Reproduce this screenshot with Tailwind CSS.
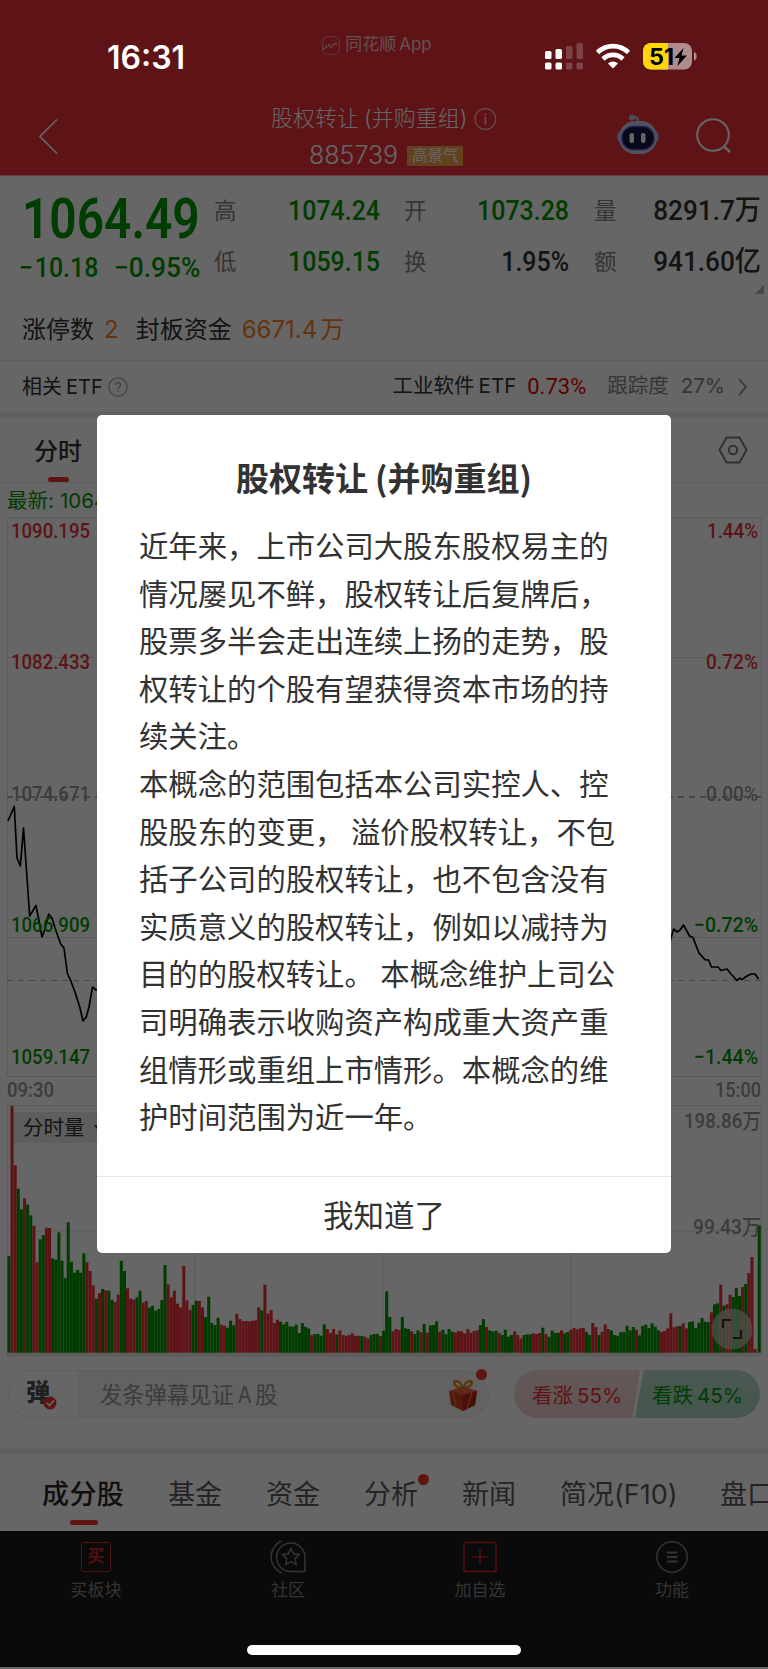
<!DOCTYPE html>
<html lang="zh-CN">

<head>
    <meta charset="UTF-8">
    <meta name="viewport" content="width=device-width, initial-scale=1.0">
    <title>股权转让(并购重组)</title>
    <script src="https://cdn.jsdelivr.net/npm/@tailwindcss/browser@4"></script>
</head>

<body class="relative w-[768px] h-[1669px] overflow-hidden bg-white whitespace-nowrap font-['Inter','Noto_Sans_CJK_SC',sans-serif]">

    <!-- Header -->
    <header class="h-[175px] bg-[#eb3237] text-white flex flex-col">
        <div class="h-[88px] flex justify-center items-center gap-[5px] text-[17px] text-white/75 pr-[14px] pt-[2px]">
            <svg class="w-[18px] h-[19px]" viewBox="0 0 18 19" fill="none" stroke="currentColor">
                <rect x="0.7" y="0.7" width="16.6" height="17.6" rx="5" stroke-opacity=".6" />
                <path d="M1 13l3-2 3-2 2 2 3-3 4-1" stroke-width="1.8" stroke-dasharray="2 1" />
            </svg>
            <span>同花顺<span class="ml-[3px]">App</span></span>
        </div>
        <div class="flex items-center h-[87px]">
            <svg class="w-[20px] h-[36px] ml-[39px] mt-[9px]" viewBox="0 0 20 36" fill="none" stroke="currentColor" stroke-width="1.6">
                <path d="M18 1.500L1 18.500l17 17" />
            </svg>
            <div class="w-[226px] ml-[212px] mt-[12px] flex flex-col font-light">
                <div class="flex items-center h-[36px] text-[22px]">
                    <span>股权转让<span class="ml-[5px]">(</span>并购重组)</span>
                    <svg class="w-[24px] h-[24px] ml-[7px]" viewBox="0 0 24 24" fill="none" stroke="currentColor" opacity=".7">
                        <circle cx="12" cy="12" r="11" stroke-width="1.3" />
                        <path d="M12 10v8M12 6v2" stroke-width="1.6" />
                    </svg>
                </div>
                <div class="flex items-center h-[38px] pl-[38px]">
                    <span class="text-[25px]">885739</span>
                    <span class="ml-[9px] w-[56px] h-[20px] leading-[20px] text-center text-[15.5px] bg-[#f6a24c] font-normal">高景气</span>
                </div>
            </div>
            <!-- assistant robot -->
            <svg class="w-[44px] h-[42px] ml-[119px] mt-[6px]" viewBox="0 0 44 42">
                <path d="M22 7c0-4-2-4-6-4" stroke="#b8c4dc" stroke-width="2.500" fill="none" />
                <circle cx="16" cy="3.500" r="3" fill="#b8c4dc" />
                <rect x="1" y="17" width="42" height="12" rx="5" fill="#9fb2d6" />
                <rect x="3" y="7" width="38" height="33" rx="16" fill="#c5d0e8" />
                <rect x="6" y="12.500" width="32" height="23" rx="11" fill="#101840" stroke="#6048c8" stroke-width="1.300" />
                <rect x="13.500" y="19" width="4.500" height="10" rx="2.200" fill="#fff" />
                <rect x="25" y="19" width="4.500" height="10" rx="2.200" fill="#fff" />
            </svg>
            <svg class="w-[36px] h-[36px] ml-[36px] mt-[9px]" viewBox="0 0 36 36" fill="none" stroke="currentColor" stroke-width="2">
                <circle cx="17" cy="17" r="15.800" />
                <path d="M27.500 28l6.500 6" stroke-width="2.600" />
            </svg>
        </div>
    </header>

    <!-- Quote summary -->
    <section class="h-[121px] border-t border-[#ffa0a0] flex">
        <div class="w-[214px] pl-[22px] text-[#009800] font-['Roboto'] font-medium">
            <div class="h-[86px] leading-[87px] text-[56px] font-semibold origin-left scale-x-[0.855]">1064.49</div>
            <div class="h-[30px] leading-[12px] text-[28px] flex">
                <span class="w-[92px]"><span class="inline-block origin-left scale-x-[0.89] -ml-[3px]">−<span class="ml-0.5">10.18</span></span></span>
                <span class="inline-block origin-left scale-x-[0.94]">−0.95%</span>
            </div>
        </div>
        <div class="grid grid-cols-[24px_142px_24px_24px_141px_25px_24px_143px] h-[102px] grid-rows-[51px_51px] items-center pt-[10px] -mt-px text-[22.5px]">
            <span class="text-[#858585]">高</span>
            <span class="text-right font-['Roboto'] font-medium text-[28px] text-[#009800] origin-right scale-x-[0.89]">1074.24</span>
            <span></span>
            <span class="text-[#858585]">开</span>
            <span class="text-right font-['Roboto'] font-medium text-[28px] text-[#009800] origin-right scale-x-[0.89]">1073.28</span>
            <span></span>
            <span class="text-[#858585]">量</span>
            <span class="text-right font-['Roboto','Noto_Sans_CJK_SC'] font-medium text-[28px] text-[#323232] origin-right scale-x-[0.935]">8291.7万</span>
            <span class="text-[#858585]">低</span>
            <span class="text-right font-['Roboto'] font-medium text-[28px] text-[#009800] origin-right scale-x-[0.89]">1059.15</span>
            <span></span>
            <span class="text-[#858585]">换</span>
            <span class="text-right font-['Roboto'] font-medium text-[28px] text-[#323232] origin-right scale-x-[0.89]">1.95%</span>
            <span></span>
            <span class="text-[#858585]">额</span>
            <span class="text-right font-['Roboto','Noto_Sans_CJK_SC'] font-medium text-[28px] text-[#323232] origin-right scale-x-[0.935]">941.60亿</span>
        </div>
    </section>
    <div class="h-[65px] flex items-center text-[24px] pl-[22px] pt-[3px] text-[#323232] border-b border-[#ececec] relative">
        <span>涨停数</span>
        <span class="text-[#ff7f1e] ml-[10px]">2</span>
        <span class="ml-[17px]">封板资金</span>
        <span class="text-[#ff7f1e] ml-[10px]">6671.4<span class="ml-[3px]">万</span></span>
        <span class="absolute right-[4px] -top-[11px] w-[9px] h-[9px] bg-[#b4b4b4] [clip-path:polygon(100%_0,100%_100%,0_100%)]"></span>
    </div>
    <div class="h-[51px] flex items-center pl-[22px] pr-[20px] text-[20px] text-[#323232]">
        <span>相关<span class="ml-[4px]">ETF</span></span>
        <svg class="w-[20px] h-[20px] ml-[5px]" viewBox="0 0 20 20" fill="none" stroke="#aaa">
            <circle cx="10" cy="10" r="9.200" stroke-width="1.200" />
            <path d="M7.500 8c0-3.500 5-3.300 5 0 0 2-2.500 2-2.500 4M10 13.500v1.600" stroke-width="1.400" />
        </svg>
        <span class="ml-auto text-[20.500px]">工业软件<span class="ml-[4px]">ETF</span></span>
        <span class="ml-[11px] mr-[21px] text-[#eb0000] font-['Roboto'] text-[22px]">0.73%</span>
        <span class="text-[20.500px] text-[#858585]">跟踪度</span>
        <span class="ml-[12px] text-[20.500px] text-[#858585]">27%</span>
        <svg class="w-[10px] h-[18px] ml-[13px]" viewBox="0 0 10 18" fill="none" stroke="#a0a0a0" stroke-width="2">
            <path d="M1 1l7 8-7 8" />
        </svg>
    </div>
    <div class="h-[6px] bg-[#f0f0f0]"></div>

    <!-- Period tabs -->
    <div class="h-[65px] flex items-center justify-between border-b border-[#ececec] pl-[34px] pr-[20px]">
        <div class="relative text-[24px] font-medium text-[#323232] pt-[3px]">
            分时
            <span class="absolute -bottom-[12px] left-[14px] w-[21px] h-[5px] rounded-full bg-[#eb3228]"></span>
        </div>
        <svg class="w-[30px] h-[28px]" viewBox="0 0 30 28" fill="none" stroke="#7c7c7c" stroke-width="2">
            <path d="M8.500 1.500h13l7 12.500-7 12.500h-13L1.500 14z" />
            <circle cx="15" cy="14" r="4.200" />
        </svg>
    </div>

    <!-- Minute price chart -->
    <svg class="block w-[768px] h-[622px] font-['Roboto']" viewBox="0 484 768 622" fill="none">
        <text x="7" y="509" font-size="20.500" fill="#009800" class="font-['Inter','Noto_Sans_CJK_SC']">最新: <tspan x="60">1064.490</tspan></text>
        <path d="M7.500 518.500H761.500V1077.500H7.500zM7.500 658.500h754M7.500 938.500h754" stroke="#e2e2e2" />
        <path d="M7 798h754" stroke="#969696" stroke-dasharray="6 5" stroke-width="1.300" />
        <path d="M7 981.500h754" stroke="#c8aa82" stroke-dasharray="6 5" />
        <polyline stroke="#000" stroke-width="1.700" stroke-linejoin="round" points="8,822 14.3,807.500 17,859 20.300,867 23.500,829 29.700,917 36,906.500 42,938 45,930 48.700,915 52,919 55,929 60.700,945 64,949 67.300,974 70,980 75,993 80,1009 83,1022 86.300,1018 89,1008 92.500,988 96,991 100,989" />
        <polyline stroke="#000" stroke-width="1.700" stroke-linejoin="round" points="670,943 671,939 673.700,930 677,933 680,931 683.500,926 689.500,937 693,938.600 699,954 705,960.600 708.500,961 711.500,968 718,968 721,971.500 727,970 731,975 737,981.500 739.500,979 742,980.500 747,977 751,975 755,975 758.500,980" />
        <g font-size="21" font-weight="500">
            <g fill="#eb3237">
                <text x="11" y="539" textLength="79" lengthAdjust="spacingAndGlyphs">1090.195</text>
                <text x="11" y="670" textLength="79" lengthAdjust="spacingAndGlyphs">1082.433</text>
                <text x="707" y="539" textLength="51" lengthAdjust="spacingAndGlyphs">1.44%</text>
                <text x="706" y="670" textLength="52" lengthAdjust="spacingAndGlyphs">0.72%</text>
            </g>
            <g fill="#969696">
                <text x="11" y="802" textLength="79" lengthAdjust="spacingAndGlyphs">1074.671</text>
                <text x="706" y="802" textLength="52" lengthAdjust="spacingAndGlyphs">0.00%</text>
                <text x="7" y="1098" textLength="47" lengthAdjust="spacingAndGlyphs">09:30</text>
                <text x="715" y="1098" textLength="46" lengthAdjust="spacingAndGlyphs">15:00</text>
            </g>
            <g fill="#009800">
                <text x="11" y="933" textLength="79" lengthAdjust="spacingAndGlyphs">1066.909</text>
                <text x="11" y="1065" textLength="79" lengthAdjust="spacingAndGlyphs">1059.147</text>
                <text x="694" y="933" textLength="64" lengthAdjust="spacingAndGlyphs">−0.72%</text>
                <text x="694" y="1065" textLength="64" lengthAdjust="spacingAndGlyphs">−1.44%</text>
            </g>
        </g>
    </svg>

    <!-- Volume chart -->
    <svg class="block w-[768px] h-[265px]" viewBox="0 1106 768 265" fill="none">
        <path d="M7.500 1106.500h754v248H7.500zM7.500 1232h754M195 1106v248M383 1106v248M570.500 1106v248" stroke="#e2e2e2" />
        <path d="M7 1356h754" stroke="#ebebeb" stroke-width="3" />
        <rect x="14" y="1113" width="100" height="31" fill="#ebebeb" />
        <text x="23" y="1136" font-size="20.500" fill="#323232" class="font-['Noto_Sans_CJK_SC']">分时量</text>
        <path d="M94 1126h10l-5 7z" fill="#323232" />
        <g id="bars"></g>
        <g font-size="21" fill="#969696" font-weight="500" class="font-['Roboto','Noto_Sans_CJK_SC']">
            <text x="684" y="1129" textLength="77" lengthAdjust="spacingAndGlyphs">198.86万</text>
            <text x="693" y="1235" textLength="68" lengthAdjust="spacingAndGlyphs">99.43万</text>
        </g>
        <circle cx="732" cy="1330" r="20.500" fill="#dcdcdc" fill-opacity=".6" />
        <path d="M723 1329v-8h8M741 1331v8h-8" stroke="#333" stroke-width="2.200" />
    </svg>

    <!-- Comment bar -->
    <div class="h-[78px] flex items-start px-[8px]">
        <div class="relative w-[482px] h-[48px] rounded-full border border-[#ebebeb] bg-[#f5f5f5] flex items-center">
            <div class="relative w-[69px] h-full rounded-l-full bg-white pl-[17px] text-[24px] leading-[44px] font-black text-[#505050]">
                弹
                <svg class="absolute left-[34px] top-[25px] w-[14px] h-[14px]" viewBox="0 0 14 14">
                    <circle cx="7" cy="7" r="6.500" fill="#eb3228" />
                    <path d="M3.500 6.500l3 3 4.500-5" stroke="#fff" stroke-width="1.600" fill="none" />
                </svg>
            </div>
            <span class="ml-[22px] mt-[2px] text-[22.300px] text-[#969696]">发条弹幕见证<span class="mx-[3px] inline-block scale-x-90">A</span>股</span>
            <svg class="absolute left-[438px] top-[8px] w-[32px] h-[33px]" viewBox="0 0 32 33">
                <path d="M15 9C8 9 5 2 9 2s6 4 6 7zM17 9c7 0 10-7 6-7s-6 4-6 7z" fill="none" stroke="#dc8c1e" stroke-width="2.500" />
                <path d="M2 12l14-4 14 4-2 14-12 6-12-6z" fill="#d23c23" />
                <path d="M2 12l14-4 14 4-14 4z" fill="#f0643c" />
                <path d="M16 16v16l12-6 2-14z" fill="#b42314" />
                <path d="M6 13l3 15M25 13l-5 17" stroke="#f0643c" stroke-width="1.500" />
            </svg>
            <span class="absolute left-[467px] -top-[2px] w-[11px] h-[11px] rounded-full bg-[#eb3228]"></span>
        </div>
        <div class="ml-[25px] w-[246px] h-[48px] flex text-[20.500px]">
            <div class="w-[126px] h-full rounded-l-full bg-gradient-to-b from-[#f6dcdc] to-[#f2cfcf] [clip-path:polygon(0_0,100%_0,94%_100%,0_100%)] pl-[18px] leading-[51px] text-[#eb3237]">看涨<span class="ml-[4px]">55%</span></div>
            <div class="w-[125px] -ml-[5px] h-full rounded-r-full bg-gradient-to-b from-[#bcdacc] to-[#a8d8c4] [clip-path:polygon(7%_0,100%_0,100%_100%,0_100%)] pl-[17px] leading-[51px] text-[#009800]">看跌<span class="ml-[4px]">45%</span></div>
        </div>
    </div>
    <div class="h-[6px] bg-[#f0f0f0]"></div>

    <!-- Section tabs -->
    <div class="h-[77px] flex items-center gap-[44px] pl-[42px] pt-[5px] text-[27px] text-[#5a5a5a]">
        <div class="relative shrink-0 w-[82px] font-medium text-[#282828] tracking-[0.4px]">
            成分股
            <span class="absolute left-[28px] -bottom-[10px] w-[28px] h-[5px] rounded-full bg-[#eb3228]"></span>
        </div>
        <div class="shrink-0 w-[54px]">基金</div>
        <div class="shrink-0 w-[54px]">资金</div>
        <div class="relative shrink-0 w-[54px]">
            分析
            <span class="absolute -right-[11px] -top-[1px] w-[11px] h-[11px] rounded-full bg-[#eb3228]"></span>
        </div>
        <div class="shrink-0 w-[54px]">新闻</div>
        <div class="shrink-0 w-[116px]">简况(F10)</div>
        <div class="shrink-0">盘口</div>
    </div>

    <!-- Bottom navigation -->
    <nav class="h-[136px] bg-[#191919] grid grid-cols-4 text-[17px] leading-[24px] text-[#828282]">
        <div class="flex flex-col items-center pt-[9px] gap-[4px]">
            <div class="h-[34px] flex items-center">
                <span class="w-[30px] h-[30px] border-[1.5px] border-[#d22828] rounded-[3px] text-[#d22828] text-[17px] leading-[27px] text-center font-bold">买</span>
            </div>
            买板块
        </div>
        <div class="flex flex-col items-center pt-[9px] gap-[4px]">
            <svg class="w-[36px] h-[34px]" viewBox="0 0 36 34" fill="none" stroke="currentColor" stroke-width="1.500">
                <path d="M35 31.500H21A14.200 14.200 0 1 1 35 17.300z" />
                <path d="M12 .8a17.500 17.500 0 0 0 0 32.400" />
                <path d="M21 8.500l2.600 5.200 5.700.8-4.100 4.100.9 5.700-5.100-2.600-5.100 2.600.9-5.700-4.100-4.100 5.700-.8z" />
            </svg>
            社区
        </div>
        <div class="flex flex-col items-center pt-[9px] gap-[4px]">
            <svg class="w-[34px] h-[34px]" viewBox="0 0 34 34" fill="none" stroke="#d22828" stroke-width="1.500">
                <rect x="1" y="2.500" width="32" height="29" rx="1" />
                <path d="M9 17h16M17 9v16" />
            </svg>
            加自选
        </div>
        <div class="flex flex-col items-center pt-[9px] gap-[4px]">
            <svg class="w-[34px] h-[34px]" viewBox="0 0 34 34" fill="none" stroke="currentColor" stroke-width="1.500">
                <circle cx="17" cy="17" r="15.200" />
                <path d="M12 12.500h10.500M12 17h10.500M12 21.500h10.500" stroke-width="2" />
            </svg>
            功能
        </div>
    </nav>

    <!-- Mask -->
    <div class="absolute inset-0 bg-black/60"></div>

    <!-- System status bar -->
    <div class="absolute top-0 left-0 w-full h-[115px] flex items-center text-white">
        <span class="ml-[107px] text-[32px] font-semibold">16:31</span>
        <svg class="absolute left-[544px] top-[42px] w-[155px] h-[28px]" viewBox="544 42 155 28" fill="#fff">
            <rect x="545" y="51" width="6.500" height="8" rx="1.500" />
            <rect x="545" y="62.500" width="6.500" height="7" rx="1.500" />
            <rect x="555.500" y="49" width="6.500" height="10" rx="1.500" />
            <rect x="555.500" y="62.500" width="6.500" height="7" rx="1.500" />
            <g opacity=".2">
                <rect x="566" y="46" width="6.500" height="13" rx="1.500" />
                <rect x="566" y="62.500" width="6.500" height="7" rx="1.500" />
                <rect x="576.500" y="43" width="6.500" height="16" rx="1.500" />
                <rect x="576.500" y="62.500" width="6.500" height="7" rx="1.500" />
            </g>
            <g fill="none" stroke="#fff" stroke-width="4.600">
                <path d="M597.500 52.500a22 22 0 0 1 31 0" />
                <path d="M603 59a14.200 14.200 0 0 1 20 0" />
            </g>
            <path d="M613 68.500l-5-5a7 7 0 0 1 10 0z" />
            <rect x="643" y="43" width="49" height="26.500" rx="8" fill="#b08c8e" />
            <path d="M651 43h17v26.500h-17a8 8 0 0 1-8-8V51a8 8 0 0 1 8-8z" fill="#ffd60a" />
            <path d="M694 52c3.500 1 3.500 7.500 0 8.500z" fill="#b08c8e" />
            <text x="649" y="65" font-size="23" font-weight="700" fill="#000" textLength="25" lengthAdjust="spacingAndGlyphs">51</text>
            <path d="M683.500 48l-9 10h5l-2 8 9.500-10.500h-5.500z" fill="#000" />
        </svg>
    </div>

    <!-- Concept dialog -->
    <div class="absolute left-[97px] top-[415px] w-[574px] h-[838px] rounded-[5px] bg-white text-[#323232] flex flex-col font-['Noto_Sans_CJK_SC',sans-serif]">
        <h2 class="h-[106px] pt-[38px] leading-[48px] text-center text-[33px] font-bold">股权转让<span class="ml-[7px]">(</span>并购重组)</h2>
        <div class="h-[655px] pl-[42px] leading-[47.6px] text-[29.350px]">
            <p>近年来，上市公司大股东股权易主的<br>情况屡见不鲜，股权转让后复牌后，<br>股票多半会走出连续上扬的走势，股<br>权转让的个股有望获得资本市场的持<br>续关注。</p>
            <p>本概念的范围包括本公司实控人、控<br>股股东的变更， 溢价股权转让，不包<br>括子公司的股权转让，也不包含没有<br>实质意义的股权转让，例如以减持为<br>目的的股权转让。 本概念维护上司公<br>司明确表示收购资产构成重大资产重<br>组情形或重组上市情形。本概念的维<br>护时间范围为近一年。</p>
        </div>
        <button class="h-[77px] border-t border-[#e6e6e6] text-[30.500px]">我知道了</button>
    </div>

    <!-- Home indicator -->
    <div class="absolute left-[247px] top-[1645px] w-[274px] h-[10px] rounded-full bg-white"></div>

    <script>
        // one entry per minute: direction, then bar height in thirds of a pixel
        const volumes = `g290 r740 r562 g492 g430 r463 g444 g412 r381 r271 g340 g353 r375 r374 g283 g279 g361 g276 g224 g391
            g273 g240 g248 g240 g298 r271 r245 r202 g162 r179 g191 r187 g186 g159 r152 r174 g276 g245 r193 r162
            r159 g166 g186 r150 r155 g135 g141 g126 g131 g158 g263 r205 r166 r186 r147 r136 r260 r157 r129 g143
            g156 r155 r136 g107 g168 g89 g83 g105 r84 r81 g75 g96 g82 r117 r101 r95 r95 r94 r96 r97
            r136 g127 r204 r118 r128 r89 r99 g93 g85 g92 g79 g78 g84 g59 g89 g78 g73 r53 g56 g56
            g51 g85 r71 r59 r71 g55 r67 r53 r51 r53 r58 r51 r51 g50 r48 r43 g53 g56 g56 r50
            g66 g184 g107 r64 r71 r68 g107 g73 g71 r64 g56 g67 r62 g86 r60 g82 g83 g94 r63 g69
            g56 g71 g63 r60 r65 r64 r58 r71 r60 r65 r67 g83 g101 r77 g67 g64 g66 r59 g53 g69
            g48 g53 r64 r53 r43 g53 g55 g55 r58 r56 r59 g75 r56 g48 g66 g59 g60 r67 g58 g62
            r69 r74 r70 r73 r74 g62 g53 r89 r77 g53 r63 r85 r71 g67 g53 g51 g62 g62 g81 g67
            g77 r69 g52 g80 g84 g74 g88 g78 g67 r62 r65 r73 r118 r76 r79 g80 r88 r73 g92 g94
            g74 g90 g104 g93 g92 r121 g145 g148 r204 g141 r145 r174 g167 g194 g170 r197 g206 r239 r287 r11`.split(/\s+/);

        const bars = document.getElementById('bars');
        const addBar = (x, h, fill) => {
            const rect = document.createElementNS('http://www.w3.org/2000/svg', 'rect');
            rect.setAttribute('x', x);
            rect.setAttribute('y', 1353.7 - h);
            rect.setAttribute('width', 3.05);
            rect.setAttribute('height', h);
            rect.setAttribute('fill', fill);
            bars.appendChild(rect);
        };
        volumes.forEach((v, i) => {
            addBar(7.4 + i * 3.122, v.slice(1) / 3, v[0] === 'r' ? '#eb3237' : '#009600');
        });
        addBar(757.7, 127.3, '#009600');
    </script>
</body>

</html>
